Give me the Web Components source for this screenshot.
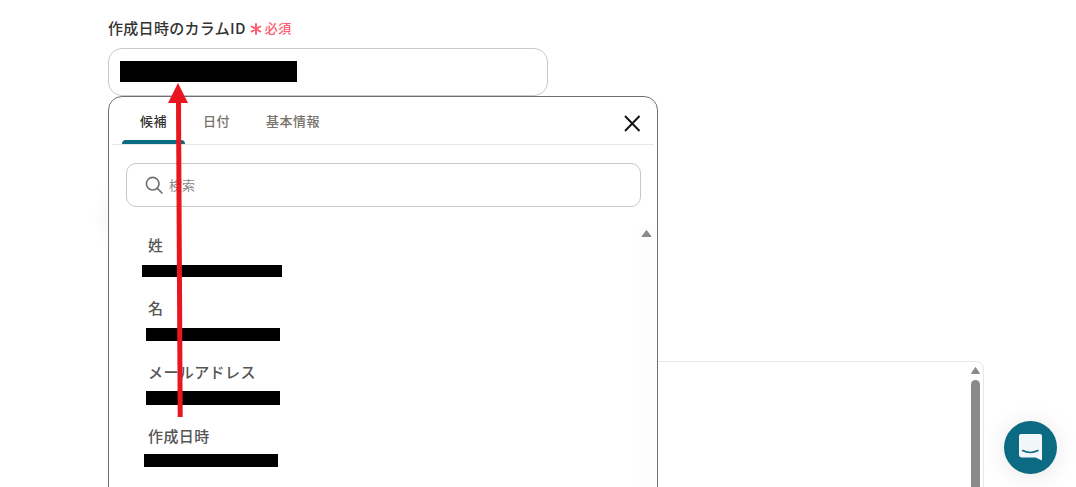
<!DOCTYPE html>
<html lang="ja">
<head>
<meta charset="utf-8">
<title>作成日時のカラムID</title>
<style>
    html, body { margin: 0; height: 100%; background: #fff; overflow: hidden; }
    body { font-family: "Noto Sans CJK JP", "Noto Sans", sans-serif; color: #333; }
</style>
</head>
<body>

<form-page>
    <field-label slot="label" required>作成日時のカラムID</field-label>
    <value-input slot="input"></value-input>
    <suggest-popup slot="popup">
        <suggest-item bar-left="33" bar-width="140" bar-height="12" nudge="0">姓</suggest-item>
        <suggest-item bar-left="37" bar-width="134" bar-height="13" nudge="0">名</suggest-item>
        <suggest-item bar-left="37" bar-width="134" bar-height="14" nudge="1">メールアドレス</suggest-item>
        <suggest-item bar-left="35" bar-width="134" bar-height="13" nudge="2">作成日時</suggest-item>
    </suggest-popup>
    <scroll-panel slot="panel"></scroll-panel>
</form-page>
<red-arrow></red-arrow>
<chat-launcher></chat-launcher>

<script>
(function() {

    // Helper: registers an element with an open shadow root from a template string
    function register(name, html, init) {
        const template = document.createElement('template');
        template.innerHTML = html;
        customElements.define(name, class extends HTMLElement {
            constructor() {
                super();
                this.attachShadow({ mode: 'open' }).appendChild(template.content.cloneNode(true));
            }
            connectedCallback() {
                if (init) init(this, this.shadowRoot);
            }
        });
    }

    // ---------------------------------------- page
    register('form-page', `
    <style>
        :host { display: block; height: 487px; overflow: hidden; padding-left: 108px; box-sizing: border-box; }
        .field { position: relative; display: flex; flex-direction: column; padding-top: 15px; }
    </style>
    <div class="field">
        <slot name="label"></slot>
        <slot name="input"></slot>
        <slot name="popup"></slot>
        <slot name="panel"></slot>
    </div>`);

    // ---------------------------------------- label
    register('field-label', `
    <style>
        :host { display: flex; align-items: center; height: 24px; margin-bottom: 9px; font-size: 15px; letter-spacing: .3px; font-weight: 500; color: #333; }
        .req { display: none; align-items: center; margin-left: 4px; color: #ff5c72; font-size: 13px; letter-spacing: .5px; font-weight: 500; }
        :host([required]) .req { display: inline-flex; }
        svg { width: 12px; height: 12px; margin-right: 3px; margin-top: 3px; }
    </style>
    <slot></slot>
    <span class="req">
        <svg viewBox="0 0 12 12" fill="none" stroke="#ff5c72" stroke-width="2" stroke-linecap="round">
            <path d="M6 1v10M1.700 3.500l8.600 5M10.300 3.500l-8.600 5"/>
        </svg>必須
    </span>`);

    // ---------------------------------------- input with redacted value
    register('value-input', `
    <style>
        :host { display: flex; align-items: center; box-sizing: border-box; width: 440px; height: 48px; padding-left: 11px; border: 1px solid #c8c8c8; border-radius: 14px; background: #fff; }
        .bar { width: 177px; height: 21px; background: #000; margin-top: -2px; }
    </style>
    <div class="bar"></div>`);

    // ---------------------------------------- popup
    register('suggest-popup', `
    <style>
        :host { position: absolute; left: 0; top: 96px; z-index: 2; box-sizing: border-box; display: block; width: 550px; height: 440px; border: 1px solid #707070; border-radius: 14px; background: #fff; font-size: 13px; }
        :host::before { content: ""; position: absolute; left: -16px; top: 85px; width: 15px; height: 70px; background: radial-gradient(ellipse at right, #f6f8f8, #fff 70%); }
        .tabs { display: flex; align-items: stretch; height: 47px; margin: 0 3px; border-bottom: 1px solid #e6e6e6; position: relative; padding-left: 10px; }
        .tab { position: relative; display: flex; align-items: center; justify-content: center; font-weight: 500; letter-spacing: .5px; color: #77726c; }
        .tab.on { width: 63px; color: #333; }
        .tab.on::after { content: ""; position: absolute; left: 0; right: 0; bottom: 0; height: 4px; border-radius: 4px 4px 0 0; background: #0b6b82; }
        .tab.t2 { margin-left: 18px; }
        .tab.t3 { margin-left: 36px; }
        .close { position: absolute; right: 12px; top: 16px; width: 20px; height: 20px; }
        .search { display: flex; align-items: center; box-sizing: border-box; width: 515px; height: 44px; margin: 18px 0 0 17px; padding-left: 17px; border: 1px solid #c8c8c8; border-radius: 10px; color: #8a8a8a; }
        .search svg { width: 20px; height: 20px; margin-right: 5px; }
        .search span { margin-top: -2px; }
        .body { display: flex; height: 300px; }
        .list { flex: 1; padding-top: 25px; display: flex; flex-direction: column; }
        .track { position: relative; width: 18px; margin-top: 18px; background: #fdfdfd; }
        .track svg { position: absolute; left: 2px; top: 4px; }
    </style>
    <div class="tabs">
        <div class="tab on">候補</div>
        <div class="tab t2">日付</div>
        <div class="tab t3">基本情報</div>
        <svg class="close" viewBox="0 0 20 20" fill="none" stroke="#111" stroke-width="1.900"><path d="M3 3l14.500 15M17.500 3L3 18"/></svg>
    </div>
    <div class="search">
        <svg viewBox="0 0 20 20" fill="none" stroke="#707070" stroke-width="1.700" stroke-linecap="round"><circle cx="8.700" cy="8.700" r="6.300"/><path d="M13.300 13.300l4.700 4.700"/></svg>
        <span>検索</span>
    </div>
    <div class="body">
        <div class="list"><slot></slot></div>
        <div class="track">
            <svg width="11" height="9" viewBox="0 0 11 9"><path d="M5.500 1.500L10 7.500H1z" fill="#8a8a8a" stroke="#8a8a8a" stroke-linejoin="round"/></svg>
        </div>
    </div>`);

    // ---------------------------------------- list item with redacted value
    register('suggest-item', `
    <style>
        :host { display: block; height: 63px; box-sizing: border-box; font-size: 15px; letter-spacing: .4px; font-weight: 500; color: #555; }
        .name { height: 26px; line-height: 26px; padding-left: 39px; }
        .bar { background: #000; }
    </style>
    <div class="name"><slot></slot></div>
    <div class="bar"></div>`, (el, root) => {
        const name = root.querySelector('.name');
        const bar = root.querySelector('.bar');
        const nudge = Number(el.getAttribute('nudge'));
        name.style.marginTop = nudge + 'px';
        name.style.marginBottom = (7 - nudge) + 'px';
        bar.style.marginLeft = el.getAttribute('bar-left') + 'px';
        bar.style.width = el.getAttribute('bar-width') + 'px';
        bar.style.height = el.getAttribute('bar-height') + 'px';
    });

    // ---------------------------------------- panel behind the popup
    register('scroll-panel', `
    <style>
        :host { position: relative; display: block; box-sizing: border-box; width: 876px; height: 200px; margin-top: 265px; border: 1px solid #e6e6e6; border-radius: 8px; background: #fff; }
        svg { position: absolute; right: 2px; top: 4px; }
        .thumb { position: absolute; right: 3px; top: 18px; width: 9px; height: 180px; border-radius: 4.500px 4.500px 0 0; background: #8a8a8a; }
    </style>
    <svg width="11" height="9" viewBox="0 0 11 9"><path d="M5.500 1.500L9.500 7.500H1.500z" fill="#8a8a8a" stroke="#8a8a8a" stroke-linejoin="round"/></svg>
    <div class="thumb"></div>`);

    // ---------------------------------------- annotation arrow over the page
    register('red-arrow', `
    <style>
        :host { position: absolute; left: 166px; top: 82px; z-index: 5; display: block; width: 24px; height: 338px; }
        svg { display: block; }
    </style>
    <svg width="24" height="338" viewBox="0 0 24 338">
        <path d="M12 1L22 21H2z" fill="#e8171f"/>
        <path d="M10 20h5l1.700 315h-5z" fill="#e8171f"/>
    </svg>`);

    // ---------------------------------------- chat launcher
    register('chat-launcher', `
    <style>
        :host { position: absolute; left: 1004px; top: 421px; z-index: 6; display: flex; align-items: center; justify-content: center; width: 53px; height: 53px; border-radius: 50%; background: #0b6b82; box-shadow: 0 2px 24px rgba(0,0,0,.1); }
        svg { position: absolute; left: 15px; top: 13px; display: block; }
    </style>
    <svg width="23" height="27" viewBox="0 0 23 27">
        <path d="M2 0h19a2 2 0 0 1 2 2v24.500l-6.500-3H3a3 3 0 0 1-3-3V2a2 2 0 0 1 2-2z" fill="#f1f7f9"/>
        <path d="M3.500 16.500c4.500 2.200 11 2.200 15.500 0" fill="none" stroke="#0b6b82" stroke-width="1.500" stroke-linecap="round"/>
    </svg>`);

})();
</script>
</body>
</html>
